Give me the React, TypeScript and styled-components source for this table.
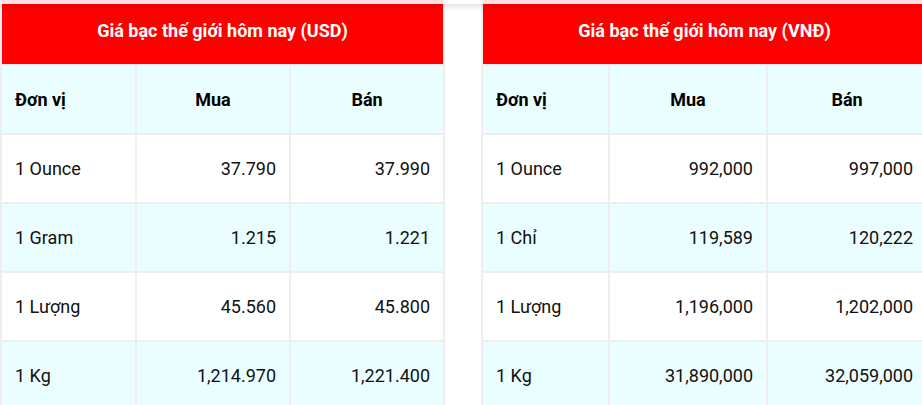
import styled, { createGlobalStyle } from "styled-components";

const GlobalStyle = createGlobalStyle`
  html, body {
    margin: 0;
    padding: 0;
    background: #fff;
    font-family: Roboto, "Noto Sans", "Liberation Sans", sans-serif;
    overflow: hidden;
  }
`;

type Row = { unit: string; buy: string; sell: string };

const usdRows: Row[] = [
  { unit: "1 Ounce", buy: "37.790", sell: "37.990" },
  { unit: "1 Gram", buy: "1.215", sell: "1.221" },
  { unit: "1 Lượng", buy: "45.560", sell: "45.800" },
  { unit: "1 Kg", buy: "1,214.970", sell: "1,221.400" },
];

const vndRows: Row[] = [
  { unit: "1 Ounce", buy: "992,000", sell: "997,000" },
  { unit: "1 Chỉ", buy: "119,589", sell: "120,222" },
  { unit: "1 Lượng", buy: "1,196,000", sell: "1,202,000" },
  { unit: "1 Kg", buy: "31,890,000", sell: "32,059,000" },
];

// faded sticky bar that sits over the top of the tables
const TopBar = styled.div`
  position: fixed;
  top: 0;
  left: 0;
  right: 0;
  height: 4px;
  background: rgba(255, 255, 255, 0.88);
  box-shadow: 0 1px 7px rgba(0, 0, 0, 0.22);
  z-index: 2;
`;

const Wrap = styled.div`
  display: flex;
  gap: 36px;
  margin-top: -2px;
  width: 960px;
`;

const Table = styled.table<{ $width: number }>`
  width: ${(p) => p.$width}px;
  flex: none;
  border-collapse: collapse;
  table-layout: fixed;
  font-size: 18px;
  color: #111;
`;

const Title = styled.th`
  background: #ff0000;
  color: #fff;
  font-size: 18px;
  font-weight: 700;
  height: 67px;
  padding: 0 0 2px;
  border: 2px solid #eee;
  border-top: none;
  text-align: center;
  box-sizing: border-box;
`;

const Tr = styled.tr<{ $tint?: boolean }>`
  background: ${(p) => (p.$tint ? "#ebfeff" : "#fff")};
`;

const Th = styled.th<{ $align?: "left" | "center" }>`
  height: 69px;
  padding: 0 13px;
  border: 2px solid #eee;
  font-weight: 700;
  color: #000;
  text-align: ${(p) => p.$align || "center"};
  box-sizing: border-box;
`;

const Td = styled.td<{ $align?: "left" | "right" }>`
  height: 69px;
  padding: 0 13px;
  border: 2px solid #eee;
  text-align: ${(p) => p.$align || "right"};
  box-sizing: border-box;
  white-space: nowrap;
`;

const PriceTable = ({ title, rows, widths }: { title: string; rows: Row[]; widths: number[] }) => (
  <Table $width={widths.reduce((a, b) => a + b, 0)}>
    <colgroup>
      {widths.map((w, i) => <col key={i} style={{ width: w }} />)}
    </colgroup>
    <thead>
      <tr>
        <Title colSpan={3}>{title}</Title>
      </tr>
      <Tr $tint>
        <Th $align="left">Đơn vị</Th>
        <Th>Mua</Th>
        <Th>Bán</Th>
      </Tr>
    </thead>
    <tbody>
      {rows.map((r, i) => (
        <Tr key={r.unit} $tint={i % 2 === 1}>
          <Td $align="left">{r.unit}</Td>
          <Td>{r.buy}</Td>
          <Td>{r.sell}</Td>
        </Tr>
      ))}
    </tbody>
  </Table>
);

export default function App() {
  return (
    <>
      <GlobalStyle />
      <TopBar />
      <Wrap>
        <PriceTable title="Giá bạc thế giới hôm nay (USD)" rows={usdRows} widths={[135, 154, 154]} />
        <PriceTable title="Giá bạc thế giới hôm nay (VNĐ)" rows={vndRows} widths={[127, 158, 160]} />
      </Wrap>
    </>
  );
}
